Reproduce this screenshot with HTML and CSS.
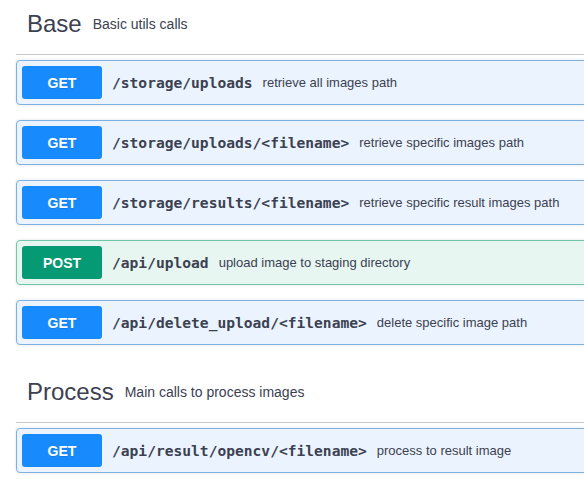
FILE: index.html
```html
<!DOCTYPE html>
<html>
<head>
<meta charset="utf-8">
<link rel="stylesheet" href="styles.css">
</head>
<body>
<div class="page">
  <section class="tag-section">
    <div class="tag-head">
      <h3 class="tag-title">Base</h3>
      <small class="tag-desc">Basic utils calls</small>
    </div>
    <div class="op op-get">
      <span class="method">GET</span>
      <span class="path">/storage/uploads</span>
      <span class="desc">retrieve all images path</span>
    </div>
    <div class="op op-get">
      <span class="method">GET</span>
      <span class="path">/storage/uploads/&lt;filename&gt;</span>
      <span class="desc">retrieve specific images path</span>
    </div>
    <div class="op op-get">
      <span class="method">GET</span>
      <span class="path">/storage/results/&lt;filename&gt;</span>
      <span class="desc">retrieve specific result images path</span>
    </div>
    <div class="op op-post">
      <span class="method">POST</span>
      <span class="path">/api/upload</span>
      <span class="desc">upload image to staging directory</span>
    </div>
    <div class="op op-get">
      <span class="method">GET</span>
      <span class="path">/api/delete_upload/&lt;filename&gt;</span>
      <span class="desc">delete specific image path</span>
    </div>
  </section>
  <section class="tag-section">
    <div class="tag-head">
      <h3 class="tag-title">Process</h3>
      <small class="tag-desc">Main calls to process images</small>
    </div>
    <div class="op op-get">
      <span class="method">GET</span>
      <span class="path">/api/result/opencv/&lt;filename&gt;</span>
      <span class="desc">process to result image</span>
    </div>
  </section>
</div>
</body>
</html>
```

FILE: styles.css
```css
html, body {
  margin: 0;
  padding: 0;
  background: #ffffff;
  overflow: hidden;
}

body {
  font-family: "Liberation Sans", Arial, sans-serif;
  color: #3b4151;
}

.page {
  width: 640px;
  padding-left: 16px;
}

.tag-section {
  padding-bottom: 8px;
}

.tag-head {
  display: flex;
  align-items: center;
  height: 47px;
  padding: 0 0 7px 11px;
  border-bottom: 1px solid #c3c6cc;
  margin-bottom: 5px;
}

.tag-title {
  margin: 0;
  font-size: 24px;
  font-weight: 400;
  line-height: normal;
  color: #3b4151;
}

.tag-desc {
  font-size: 14px;
  padding: 0 11px;
  color: #3b4151;
}

.op {
  display: flex;
  align-items: center;
  height: 33px;
  padding: 5px;
  border: 1px solid;
  border-radius: 4px;
  margin-bottom: 15px;
  box-shadow: 0 0 3px rgba(0, 0, 0, 0.12);
}

.op-get {
  background: #ebf4fe;
  border-color: #7cb1e4;
}

.op-post {
  background: #e8f6f1;
  border-color: #6fc7a8;
}

.method {
  width: 80px;
  height: 33px;
  display: flex;
  align-items: center;
  justify-content: center;
  border-radius: 3px;
  color: #ffffff;
  font-size: 14px;
  font-weight: 700;
  text-shadow: 0 1px 0 rgba(0, 0, 0, 0.1);
  flex-shrink: 0;
}

.op-get .method {
  background: #178bfe;
}

.op-post .method {
  background: #069a74;
}

.path {
  font-family: "DejaVu Sans Mono", "Liberation Mono", monospace;
  font-weight: 700;
  font-size: 14.6px;
  padding: 0 10px;
  color: #3b4151;
  white-space: nowrap;
}

.desc {
  font-size: 13px;
  color: #3b4151;
  white-space: nowrap;
}
```
